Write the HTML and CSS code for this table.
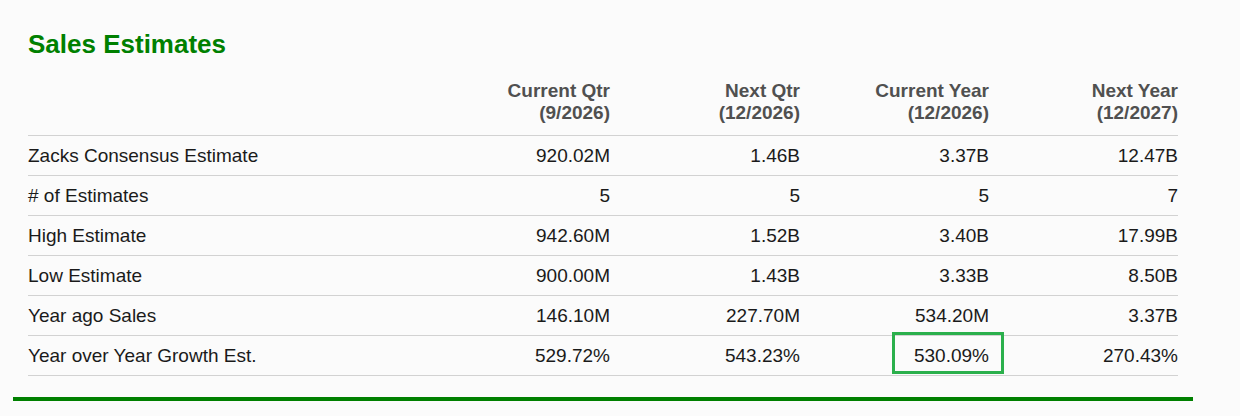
FILE: index.html
```html
<!DOCTYPE html>
<html lang="en">
<head>
<meta charset="utf-8">
<title>Sales Estimates</title>
<link rel="stylesheet" href="styles.css">
</head>
<body>
<section class="estimates">
  <h2 class="estimates-title">Sales Estimates</h2>
  <table class="est-table">
    <colgroup>
      <col class="col-label">
      <col class="col-num">
      <col class="col-num">
      <col class="col-num-narrow">
      <col class="col-num-narrow">
    </colgroup>
    <thead>
      <tr>
        <th class="th-label"></th>
        <th>Current Qtr<br>(9/2026)</th>
        <th>Next Qtr<br>(12/2026)</th>
        <th>Current Year<br>(12/2026)</th>
        <th>Next Year<br>(12/2027)</th>
      </tr>
    </thead>
    <tbody>
      <tr>
        <td class="label">Zacks Consensus Estimate</td>
        <td>920.02M</td><td>1.46B</td><td>3.37B</td><td>12.47B</td>
      </tr>
      <tr>
        <td class="label"># of Estimates</td>
        <td>5</td><td>5</td><td>5</td><td>7</td>
      </tr>
      <tr>
        <td class="label">High Estimate</td>
        <td>942.60M</td><td>1.52B</td><td>3.40B</td><td>17.99B</td>
      </tr>
      <tr>
        <td class="label">Low Estimate</td>
        <td>900.00M</td><td>1.43B</td><td>3.33B</td><td>8.50B</td>
      </tr>
      <tr>
        <td class="label">Year ago Sales</td>
        <td>146.10M</td><td>227.70M</td><td>534.20M</td><td>3.37B</td>
      </tr>
      <tr>
        <td class="label">Year over Year Growth Est.</td>
        <td>529.72%</td><td>543.23%</td><td class="highlighted">530.09%<span class="highlight-box"></span></td><td>270.43%</td>
      </tr>
    </tbody>
  </table>
</section>
</body>
</html>
```

FILE: styles.css
```css
html, body {
  margin: 0;
  padding: 0;
  background: #fbfbfb;
}

body {
  font-family: "Liberation Sans", Arial, sans-serif;
  color: #1a1a1a;
}

.estimates {
  margin-left: 13px;
  width: 1180px;
  box-sizing: border-box;
  padding: 29px 15px 21px 15px;
  border-bottom: 4px solid #008000;
}

.estimates-title {
  margin: 0 0 21px 0;
  font-size: 26px;
  line-height: 30px;
  font-weight: bold;
  color: #008000;
}

.est-table {
  width: 1150px;
  border-collapse: separate;
  border-spacing: 0;
  table-layout: fixed;
  font-size: 19px;
}

.col-label { width: 392px; }
.col-num { width: 190px; }
.col-num-narrow { width: 189px; }

.est-table th {
  font-weight: bold;
  color: #505050;
  text-align: right;
  vertical-align: bottom;
  line-height: 22px;
  padding: 0 0 11px 0;
  border-bottom: 1px solid #d2d2d2;
}

.est-table td {
  text-align: right;
  padding: 0;
  line-height: 39px;
  border-bottom: 1px solid #d2d2d2;
  white-space: nowrap;
}

.est-table td.label {
  text-align: left;
}

.highlighted {
  position: relative;
}

.highlight-box {
  position: absolute;
  top: -4px;
  right: -15px;
  width: 112px;
  height: 42px;
  box-sizing: border-box;
  border: 3px solid #2bb04c;
}
```
